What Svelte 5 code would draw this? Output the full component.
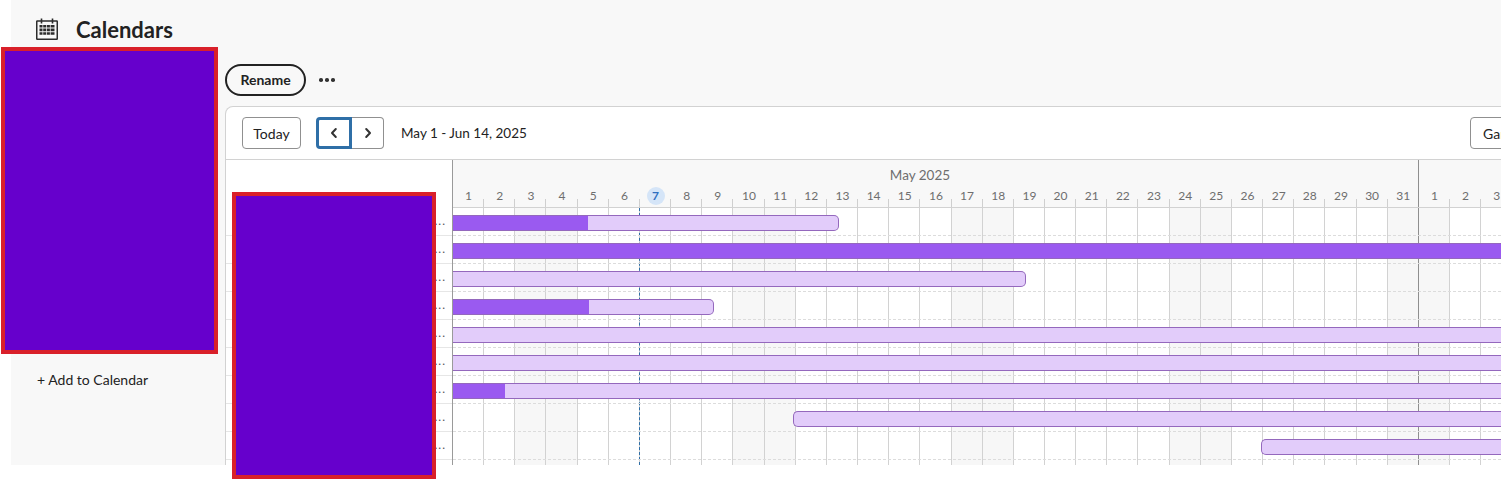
<script lang="ts">
	const dayWidth = 31.16;

	type Cell = { label: number; weekend: boolean; today: boolean; monthEnd: boolean };

	const days: Cell[] = [];
	for (let i = 0; i < 34; i++) {
		const date = new Date(2025, 4, i + 1);
		days.push({
			label: date.getDate(),
			weekend: date.getDay() === 6 || date.getDay() === 0,
			today: i === 6,
			monthEnd: i === 30
		});
	}

	// start/end are in pixels from the chart's left edge, progress too
	const bars = [
		{ start: 0, end: 386, progress: 135, open: 'left' },
		{ start: 0, end: 1100, progress: 1100, open: 'both' },
		{ start: 0, end: 573, progress: 0, open: 'left' },
		{ start: 0, end: 261, progress: 136, open: 'left' },
		{ start: 0, end: 1100, progress: 0, open: 'both' },
		{ start: 0, end: 1100, progress: 0, open: 'both' },
		{ start: 0, end: 1100, progress: 52, open: 'both' },
		{ start: 340, end: 1100, progress: 0, open: 'right' },
		{ start: 808, end: 1100, progress: 0, open: 'right' }
	];
</script>

<div class="page">
	<header class="title-bar">
		<svg class="cal-icon" viewBox="0 0 22 22" width="22" height="22" aria-hidden="true">
			<rect x="0.75" y="3" width="20.5" height="18.25" fill="none" stroke="#2c2c2c" stroke-width="1.5" rx="0.5" />
			<path d="M5.5 0.5v5M16.5 0.5v5" stroke="#2c2c2c" stroke-width="1.6" />
			<path
				d="M3.5 7h3v2.6h-3zM7.2 7h3v2.6h-3zM10.9 7h3v2.6h-3zM14.6 7h3.9v2.6h-3.9zM3.5 10.6h3v2.6h-3zM7.2 10.6h3v2.6h-3zM10.9 10.6h3v2.6h-3zM14.6 10.6h3.9v2.6h-3.9zM3.5 14.2h3v2.6h-3zM7.2 14.2h3v2.6h-3zM10.9 14.2h3v2.6h-3zM14.6 14.2h3.9v2.6h-3.9z"
				fill="#2c2c2c"
			/>
		</svg>
		<h1>Calendars</h1>
	</header>

	<div class="content">
		<aside class="sidebar">
			<button class="add-link">+ Add to Calendar</button>
		</aside>

		<main class="main">
			<div class="actions">
				<button class="rename">Rename</button>
				<span class="more" aria-label="More"><i></i><i></i><i></i></span>
			</div>

			<section class="card">
				<div class="toolbar">
					<button class="btn today-btn">Today</button>
					<div class="nav">
						<button class="nav-btn prev" aria-label="Previous">
							<svg viewBox="0 0 10 12" width="10" height="12"><path d="M6.8 2 3 6l3.8 4" /></svg>
						</button>
						<button class="nav-btn next" aria-label="Next">
							<svg viewBox="0 0 10 12" width="10" height="12"><path d="M3.2 2 7 6l-3.8 4" /></svg>
						</button>
					</div>
					<span class="range">May 1 - Jun 14, 2025</span>
					<button class="btn view">Gantt</button>
				</div>

				<div class="timeline">
					<div class="labels">
						<div class="labels-head"></div>
						{#each bars as _}
							<div class="label-row">...</div>
						{/each}
					</div>

					<div class="chart">
						<div class="chart-head">
							<div class="months">
								<div class="month may" style="width: {31 * dayWidth}px">May 2025</div>
							</div>
							<div class="days">
								{#each days as day}
									<div class="day" class:month-end={day.monthEnd} style="width: {dayWidth}px">
										<span class:today={day.today}>{day.label}</span>
									</div>
								{/each}
							</div>
						</div>

						<div class="chart-body">
							<div class="columns">
								{#each days as day}
									<div
										class="col"
										class:weekend={day.weekend}
										class:month-end={day.monthEnd}
										class:today-col={day.today}
										style="width: {dayWidth}px"
									></div>
								{/each}
							</div>

							{#each bars as bar}
								<div class="row">
									<div
										class="bar open-{bar.open}"
										style="margin-left: {bar.start}px; width: {bar.end - bar.start}px"
									>
										{#if bar.progress}
											<div class="progress" style="width: {bar.progress}px"></div>
										{/if}
									</div>
								</div>
							{/each}
						</div>
					</div>
				</div>
			</section>
		</main>
	</div>
</div>

<div class="redact first"></div>
<div class="redact second"></div>

<style>
	:global(body) {
		background: #fff;
		overflow: hidden;
		font-family: Lato, 'Open Sans', sans-serif;
		color: #222;
	}

	button {
		font-family: inherit;
		color: inherit;
		background: none;
		padding: 0;
		cursor: pointer;
	}

	.page {
		margin-left: 11px;
		width: 1490px;
		height: 465px;
		background: #f8f8f8;
		display: flex;
		flex-direction: column;
		overflow: hidden;
	}

	.title-bar {
		height: 58px;
		padding-left: 25px;
		display: flex;
		align-items: center;
		gap: 18px;
		flex-shrink: 0;
	}

	.cal-icon {
		flex-shrink: 0;
	}

	h1 {
		margin: 0;
		font-size: 22px;
		font-weight: 700;
	}

	.content {
		flex: 1;
		display: flex;
		min-height: 0;
	}

	.sidebar {
		width: 214px;
		flex-shrink: 0;
		padding: 311px 0 0 26px;
		box-sizing: border-box;
	}

	.add-link {
		border: 0;
		font-size: 14px;
		line-height: 21px;
	}

	.main {
		flex: 1;
		min-width: 0;
		padding-top: 6px;
		display: flex;
		flex-direction: column;
		overflow: hidden;
	}

	.actions {
		display: flex;
		align-items: center;
		gap: 13px;
		height: 32px;
		margin-bottom: 10px;
		flex-shrink: 0;
	}

	.rename {
		width: 81px;
		height: 32px;
		border: 2px solid #222;
		border-radius: 16px;
		font-size: 14px;
		font-weight: 700;
		padding-bottom: 2px;
	}

	.more {
		display: flex;
		gap: 2.5px;
	}

	.more i {
		width: 3.5px;
		height: 3.5px;
		border-radius: 50%;
		background: #333;
	}

	.card {
		flex: 1;
		width: 1352px;
		box-sizing: border-box;
		background: #fff;
		border: 1px solid #d2d2d2;
		border-bottom: 0;
		border-radius: 8px 8px 0 0;
		display: flex;
		flex-direction: column;
		min-height: 0;
	}

	.toolbar {
		height: 53px;
		flex-shrink: 0;
		box-sizing: border-box;
		border-bottom: 1px solid #d2d2d2;
		display: flex;
		align-items: center;
		padding: 0 16px;
	}

	.btn {
		height: 32px;
		border: 1px solid #909090;
		border-radius: 4px;
		font-size: 14px;
	}

	.today-btn {
		width: 59px;
		margin-right: 15px;
		margin-left: 0;
	}

	.view {
		width: 90px;
		margin-left: auto;
		text-align: left;
		padding-left: 12px;
	}

	.nav {
		display: flex;
		height: 32px;
		margin-right: 17px;
	}

	.nav-btn {
		display: flex;
		align-items: center;
		justify-content: center;
		box-sizing: border-box;
		background: #fff;
	}

	.nav-btn svg path {
		fill: none;
		stroke: #333;
		stroke-width: 2;
		stroke-linecap: round;
		stroke-linejoin: round;
	}

	.prev {
		width: 36px;
		border: 3px solid #2f6fa7;
		border-radius: 4px 0 0 4px;
		position: relative;
		z-index: 1;
	}

	.next {
		width: 32px;
		border: 1px solid #909090;
		border-left: 0;
		border-radius: 0 4px 4px 0;
	}

	.range {
		font-size: 13.5px;
	}

	.timeline {
		flex: 1;
		display: flex;
		min-height: 0;
	}

	.labels {
		width: 227px;
		flex-shrink: 0;
		box-sizing: border-box;
		border-right: 1px solid #9a9a9a;
		display: flex;
		flex-direction: column;
	}

	.labels-head {
		height: 48px;
		flex-shrink: 0;
	}

	.label-row {
		height: 28px;
		flex-shrink: 0;
		box-sizing: border-box;
		padding: 6px 6px 0 0;
		border-bottom: 1px solid #e6e6e6;
		font-size: 12px;
		line-height: 14px;
		letter-spacing: 1px;
		color: #555;
		text-align: right;
	}

	.chart {
		flex: 1;
		min-width: 0;
		display: flex;
		flex-direction: column;
	}

	.chart-head {
		height: 48px;
		flex-shrink: 0;
		box-sizing: border-box;
		background: #f8f8f8;
		border-bottom: 1px solid #d2d2d2;
		position: relative;
	}

	.months {
		display: flex;
		height: 26px;
		box-sizing: border-box;
	}

	.month {
		flex-shrink: 0;
		box-sizing: border-box;
		font-size: 13.5px;
		line-height: 31px;
		color: #6e6e6e;
		text-align: center;
	}

	.may {
		padding-right: 31px;
		border-right: 1px solid #8f8f8f;
	}

	.days {
		display: flex;
		height: 21px;
	}

	.day {
		flex-shrink: 0;
		box-sizing: border-box;
		height: 21px;
		position: relative;
		text-align: center;
		font-size: 12px;
		line-height: 18px;
		color: #6e6e6e;
	}

	.day span {
		display: inline-block;
		min-width: 18px;
		height: 18px;
		margin-top: 1px;
		border-radius: 50%;
	}

	.day .today {
		background: #d5e5f8;
		color: #2f6fc0;
		font-weight: 700;
	}

	.day::after {
		content: '';
		position: absolute;
		right: 0;
		bottom: 0;
		width: 1px;
		height: 8px;
		background: #cfcfcf;
	}

	.day.month-end::after {
		height: 21px;
		background: #8f8f8f;
	}

	.chart-body {
		flex: 1;
		position: relative;
		min-height: 0;
		overflow: hidden;
	}

	.columns {
		position: absolute;
		inset: 0;
		display: flex;
	}

	.col {
		flex-shrink: 0;
		box-sizing: border-box;
		border-right: 1px solid #d2d2d2;
		position: relative;
	}

	.col.weekend {
		background: #f7f7f7;
	}

	.col.month-end {
		border-right-color: #8f8f8f;
	}

	.col.today-col::before {
		content: '';
		position: absolute;
		top: 0;
		bottom: 0;
		left: -1px;
		border-left: 1px dashed #2f6fa7;
	}

	.row {
		height: 28px;
		box-sizing: border-box;
		padding-top: 7px;
		border-bottom: 1px dashed #dcdcdc;
		position: relative;
	}

	.bar {
		height: 16px;
		box-sizing: border-box;
		background: #e2ccfa;
		border: 1px solid #9468bd;
		overflow: hidden;
	}

	.open-left {
		border-left: 0;
		border-radius: 0 5px 5px 0;
	}

	.open-right {
		border-right: 0;
		border-radius: 5px 0 0 5px;
	}

	.open-both {
		border-left: 0;
		border-right: 0;
	}

	.progress {
		height: 100%;
		background: #9a5af0;
	}

	.redact {
		position: absolute;
		box-sizing: border-box;
		background: #6600cc;
		border: 4px solid #d9202a;
	}

	.first {
		left: 1px;
		top: 47px;
		width: 217px;
		height: 307px;
	}

	.second {
		left: 232px;
		top: 192px;
		width: 204px;
		height: 287px;
	}
</style>
